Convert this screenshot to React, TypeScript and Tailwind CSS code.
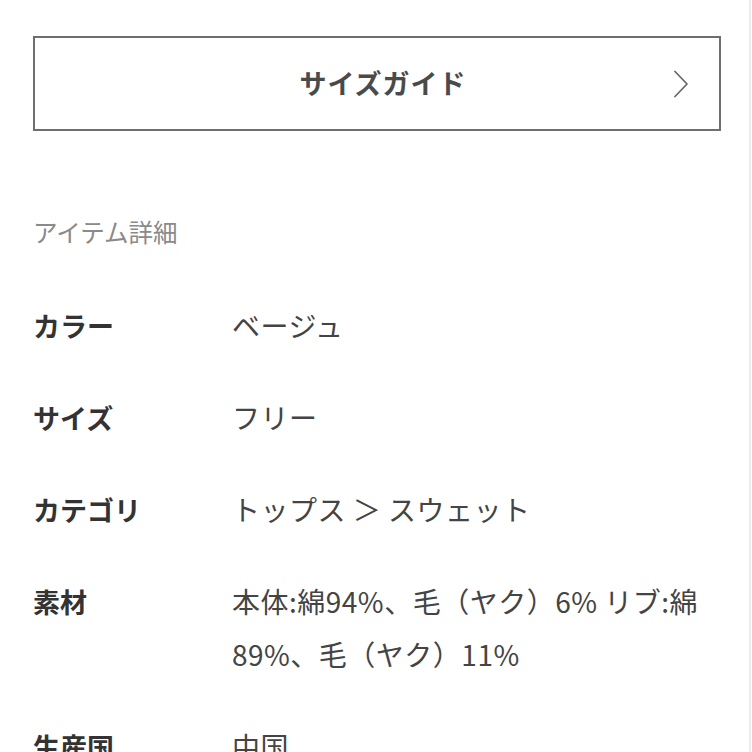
import React from "react";

const font = { fontFamily: '"Noto Sans CJK JP", "Noto Sans", sans-serif' };

const rows: { label: string; value: React.ReactNode }[] = [
  { label: "カラー", value: "ベージュ" },
  { label: "サイズ", value: "フリー" },
  { label: "カテゴリ", value: "トップス ＞ スウェット" },
  {
    label: "素材",
    value: (
      <>
        本体:綿94%、毛（ヤク）6% リブ:綿
        <br />
        89%、毛（ヤク）11%
      </>
    ),
  },
  { label: "生産国", value: "中国" },
];

export default function App() {
  return (
    <div
      className="w-[752px] h-[752px] overflow-hidden bg-white relative"
      style={font}
    >
      <div className="absolute top-0 right-[1px] w-[2px] h-full bg-[#ececec]" />
      <div className="px-[33px] pt-[36px]">
        <button className="relative w-[688px] h-[95px] border-2 border-[#6e6e6e] bg-white flex items-center justify-center pl-[12px]">
          <span className="text-[27px] font-bold text-[#4a4a4a] tracking-[1px]">
            サイズガイド
          </span>
          <svg
            className="absolute right-[30px] top-1/2 -translate-y-1/2"
            width="16"
            height="28"
            viewBox="0 0 16 28"
            fill="none"
          >
            <path
              d="M2 1.5 L14 14 L2 26.5"
              stroke="#6a6a6a"
              strokeWidth="1.8"
              strokeLinecap="round"
              strokeLinejoin="round"
            />
          </svg>
        </button>

        <div className="mt-[85px] text-[24.5px] leading-[32px] text-[#8a8a8a]">
          アイテム詳細
        </div>

        <div className="mt-[51px] flex flex-col gap-[39px]">
          {rows.map((r) => (
            <div key={r.label} className="flex leading-[53px]">
              <div className="w-[199px] shrink-0 text-[27px] font-bold text-[#333333]">
                {r.label}
              </div>
              <div className="text-[28px] tracking-[0.5px] text-[#444444] whitespace-nowrap">
                {r.value}
              </div>
            </div>
          ))}
        </div>
      </div>
    </div>
  );
}
